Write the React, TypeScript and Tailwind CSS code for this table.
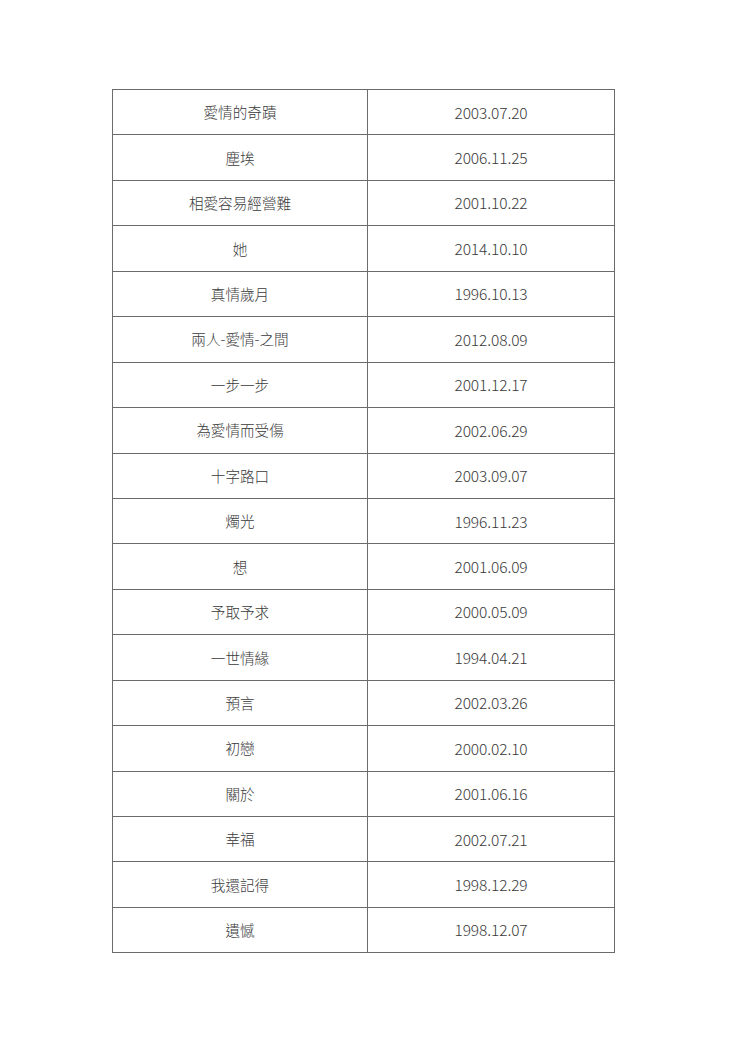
import React from "react";

const rows: [string, string][] = [
  ["愛情的奇蹟", "2003.07.20"],
  ["塵埃", "2006.11.25"],
  ["相愛容易經營難", "2001.10.22"],
  ["她", "2014.10.10"],
  ["真情歲月", "1996.10.13"],
  ["兩人-愛情-之間", "2012.08.09"],
  ["一步一步", "2001.12.17"],
  ["為愛情而受傷", "2002.06.29"],
  ["十字路口", "2003.09.07"],
  ["燭光", "1996.11.23"],
  ["想", "2001.06.09"],
  ["予取予求", "2000.05.09"],
  ["一世情緣", "1994.04.21"],
  ["預言", "2002.03.26"],
  ["初戀", "2000.02.10"],
  ["關於", "2001.06.16"],
  ["幸福", "2002.07.21"],
  ["我還記得", "1998.12.29"],
  ["遺憾", "1998.12.07"],
];

export default function App() {
  return (
    <div
      className="w-[740px] h-[1047px] bg-white pt-[89px] pl-[112px]"
      style={{ fontFamily: '"Noto Sans CJK TC", "Noto Sans", sans-serif' }}
    >
      <table className="border-collapse w-[503px] table-fixed text-[14.6px] font-light text-[#3a3a3a]">
        <colgroup>
          <col className="w-[255px]" />
          <col />
        </colgroup>
        <tbody>
          {rows.map(([a, b], i) => (
            <tr key={i} className="h-[45.45px]">
              <td className="border border-[#6b6b6b] text-center align-middle p-0">{a}</td>
              <td className="border border-[#6b6b6b] text-center align-middle p-0 text-[15.5px] tracking-[-0.1px]">{b}</td>
            </tr>
          ))}
        </tbody>
      </table>
    </div>
  );
}
